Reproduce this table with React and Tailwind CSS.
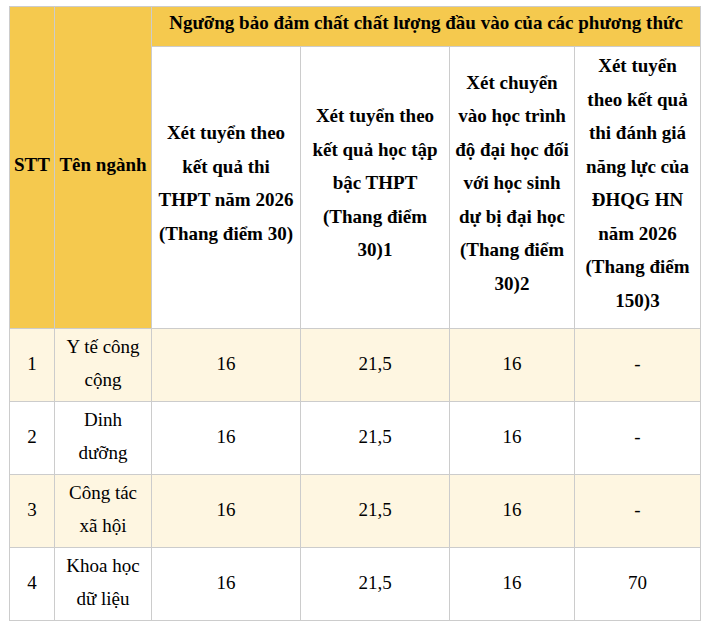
const rows = [
  { stt: '1', name: ['Y tế công', 'cộng'], a: '16', b: '21,5', c: '16', d: '-', shaded: true },
  { stt: '2', name: ['Dinh', 'dưỡng'], a: '16', b: '21,5', c: '16', d: '-', shaded: false },
  { stt: '3', name: ['Công tác', 'xã hội'], a: '16', b: '21,5', c: '16', d: '-', shaded: true },
  { stt: '4', name: ['Khoa học', 'dữ liệu'], a: '16', b: '21,5', c: '16', d: '70', shaded: false },
];

// method headers, broken the way the source table wraps them
const methods = [
  ['Xét tuyển theo', 'kết quả thi', 'THPT năm 2026', '(Thang điểm 30)'],
  ['Xét tuyển theo', 'kết quả học tập', 'bậc THPT', '(Thang điểm', '30)1'],
  ['Xét chuyển', 'vào học trình', 'độ đại học đối', 'với học sinh', 'dự bị đại học', '(Thang điểm', '30)2'],
  ['Xét tuyển', 'theo kết quả', 'thi đánh giá', 'năng lực của', 'ĐHQG HN', 'năm 2026', '(Thang điểm', '150)3'],
];

function Lines({ lines }) {
  return lines.map((l, i) => (
    <span key={i} className="block whitespace-nowrap">{l}</span>
  ));
}

const cell = 'border border-[#cccccc] px-[3px] text-center align-middle';

export default function App() {
  return (
    <div className="bg-white min-h-[632px] pt-[6px] pl-[9px] font-['Liberation_Serif',serif] text-black">
      <table className="table-fixed border-collapse w-[691px] text-[19px]">
        <colgroup>
          <col className="w-[45px]" />
          <col className="w-[97px]" />
          <col className="w-[149px]" />
          <col className="w-[149px]" />
          <col className="w-[125px]" />
          <col className="w-[126px]" />
        </colgroup>
        <thead className="font-bold leading-[33.5px]">
          <tr className="h-[40px]">
            <th rowSpan={2} className={`${cell} bg-[#f5c94e] pt-0 pb-[6px]`}>STT</th>
            <th rowSpan={2} className={`${cell} bg-[#f5c94e] pt-0 pb-[6px] whitespace-nowrap`}>Tên ngành</th>
            <th colSpan={4} className={`${cell} bg-[#f5c94e] leading-[30px] pt-0 pb-[8px]`}>
              Ngưỡng bảo đảm chất chất lượng đầu vào của các phương thức
            </th>
          </tr>
          <tr className="h-[282px]">
            {methods.map((m, i) => (
              <th key={i} className={`${cell} bg-white pt-0 pb-[9px]`}>
                <Lines lines={m} />
              </th>
            ))}
          </tr>
        </thead>
        <tbody className="leading-[33px]">
          {rows.map((r) => (
            <tr key={r.stt} className={`h-[73px] ${r.shaded ? 'bg-[#fef6e1]' : 'bg-white'}`}>
              <td className={`${cell} pt-0 pb-[4px]`}>{r.stt}</td>
              <td className={`${cell} pt-0 pb-[5px]`}><Lines lines={r.name} /></td>
              <td className={`${cell} pt-0 pb-[4px]`}>{r.a}</td>
              <td className={`${cell} pt-0 pb-[4px]`}>{r.b}</td>
              <td className={`${cell} pt-0 pb-[4px]`}>{r.c}</td>
              <td className={`${cell} pt-0 pb-[4px]`}>{r.d}</td>
            </tr>
          ))}
        </tbody>
      </table>
    </div>
  );
}
